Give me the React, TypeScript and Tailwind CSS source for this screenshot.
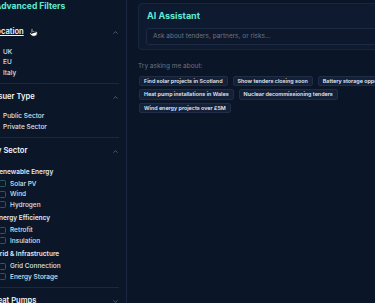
import { ChevronUp, ChevronDown, Pointer } from "lucide-react";

const FONT = { fontFamily: "Inter, 'Noto Sans', sans-serif" };

const SUGGESTIONS = [
  "Find solar projects in Scotland",
  "Show tenders closing soon",
  "Battery storage opportunities",
  "Heat pump installations in Wales",
  "Nuclear decommissioning tenders",
  "Wind energy projects over £5M",
];

const SECTOR_GROUPS = [
  { title: "Renewable Energy", items: ["Solar PV", "Wind", "Hydrogen"] },
  { title: "Energy Efficiency", items: ["Retrofit", "Insulation"] },
  { title: "Grid & Infrastructure", items: ["Grid Connection", "Energy Storage"] },
];

function SectionTitle({ label, open = true, hover = false }: { label: string; open?: boolean; hover?: boolean }) {
  return (
    <div className="relative flex h-[10px] items-center justify-between">
      <span className={`text-[7.6px] font-semibold leading-[10px] text-[#f1f5f9] ${hover ? "underline underline-offset-1" : ""}`}>
        {label}
      </span>
      {hover && (
        <Pointer
          size={9}
          fill="#ffffff"
          stroke="#111111"
          strokeWidth={2}
          className="absolute left-[37px] top-[1px]"
        />
      )}
      {open ? (
        <ChevronUp size={7} className="text-[#64748b]" strokeWidth={2.5} />
      ) : (
        <ChevronDown size={7} className="text-[#64748b]" strokeWidth={2.5} />
      )}
    </div>
  );
}

function Option({ label }: { label: string }) {
  return <div className="h-[10.5px] pl-[11px] text-[6.5px] font-medium leading-[10.5px] text-[#dbe2ec]">{label}</div>;
}

function CheckRow({ label }: { label: string }) {
  return (
    <div className="flex h-[10.5px] items-center gap-[4px] pl-[7px]">
      <span className="h-[7px] w-[7px] rounded-[1.5px] border border-[#2c5a60] bg-[#0c1829]" />
      <span className="text-[6.5px] font-medium leading-[10.5px] text-[#dbe2ec]">{label}</span>
    </div>
  );
}

export default function App() {
  return (
    <div className="flex h-[303px] w-[375px] overflow-hidden bg-[#0a1628]" style={FONT}>
      {/* Sidebar */}
      <aside className="ml-[-8px] w-[135px] shrink-0 border-r border-[#1a2740] bg-[#0b1729] pr-[7px]">
        <h2 className="pl-[3px] text-[8.5px] font-bold leading-[12px] text-[#5eead4]">Advanced Filters</h2>

        <div className="mt-[15px] border-b border-[#1c283c] pb-[5px]">
          <SectionTitle label="Location" hover />
          <div className="mt-[9.5px]">
            <Option label="UK" />
            <Option label="EU" />
            <Option label="Italy" />
          </div>
        </div>

        <div className="border-b border-[#1c283c] pb-[5px] pt-[8px]">
          <SectionTitle label="Issuer Type" />
          <div className="mt-[9px]">
            <Option label="Public Sector" />
            <Option label="Private Sector" />
          </div>
        </div>

        <div className="border-b border-[#1c283c] pb-[5px] pt-[8px]">
          <SectionTitle label="By Sector" />
          <div className="mt-[10.5px] flex flex-col gap-[3px]">
            {SECTOR_GROUPS.map((g) => (
              <div key={g.title}>
                <div className="mb-[2px] h-[10px] pl-[3px] text-[6.5px] font-semibold leading-[10px] text-[#e2e8f0]">
                  {g.title}
                </div>
                {g.items.map((it) => (
                  <CheckRow key={it} label={it} />
                ))}
              </div>
            ))}
          </div>
        </div>

        <div className="pt-[8px]">
          <SectionTitle label="Heat Pumps" open={false} />
        </div>
      </aside>

      {/* Main */}
      <main className="min-w-0 flex-1 pl-[11px] pt-[3px]">
        <div className="w-[560px] rounded-[4px] border border-[#17253d] bg-[#0e1a30] px-[7px] pb-[4px] pt-[6px]">
          <h3 className="pl-[1px] text-[9px] font-bold leading-[12px] text-[#5eead4]">AI Assistant</h3>
          <div className="mt-[6px] flex h-[17px] items-center rounded-[3px] border border-[#1c2a44] bg-[#0d182d] px-[6px]">
            <span className="text-[6.5px] text-[#6b7587]">Ask about tenders, partners, or risks...</span>
          </div>
        </div>

        <div className="mt-[12px] text-[6.5px] leading-[9px] text-[#6b7280]">Try asking me about:</div>
        <div className="mt-[4.5px] flex w-[275px] flex-wrap gap-x-[5px] gap-y-[3px] pl-[1px]">
          {SUGGESTIONS.map((s) => (
            <span
              key={s}
              className="h-[10.5px] whitespace-nowrap rounded-[2px] border border-[#1f2d46] bg-[#132038] px-[4px] text-[5.4px] font-semibold leading-[9px] text-[#e2e8f0]"
            >
              {s}
            </span>
          ))}
        </div>
      </main>
    </div>
  );
}
